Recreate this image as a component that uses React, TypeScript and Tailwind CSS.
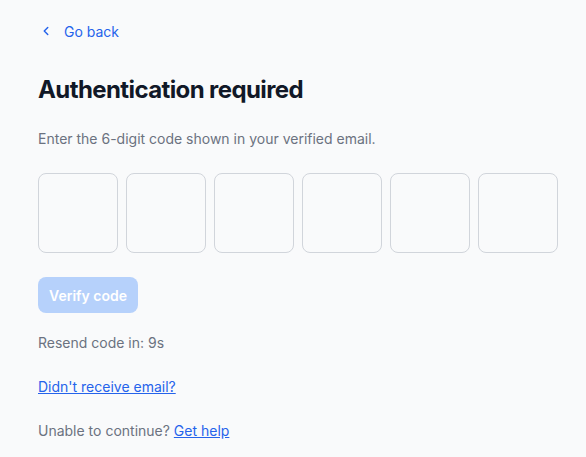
import React from 'react'
import { ChevronLeft } from 'lucide-react'

export default function App() {
  const digits = [0, 1, 2, 3, 4, 5]
  return (
    <div
      className="min-h-screen bg-[#f9fafb] pl-[38px] pr-[28px] pt-[20px]"
      style={{ fontFamily: 'Inter, "Noto Sans", sans-serif' }}
    >
      <a href="#" className="flex items-center gap-[11px] h-[22px] text-[14px] text-[#2563eb]">
        <ChevronLeft className="w-[14px] h-[14px] ml-[1px]" strokeWidth={2.5} />
        <span>Go back</span>
      </a>
      <h1 className="mt-[32px] text-[24px] leading-[32px] font-bold text-[#111827] tracking-[-0.6px]">
        Authentication required
      </h1>
      <p className="mt-[23px] text-[14px] leading-[20px] text-[#6b7280]">
        Enter the 6-digit code shown in your verified email.
      </p>
      <div className="mt-[24px] flex gap-[8px]">
        {digits.map((d) => (
          <input
            key={d}
            type="text"
            maxLength={1}
            className="w-[80px] h-[80px] rounded-[8px] border border-[#d1d5db] bg-[#f9fafb] text-center text-[24px]"
          />
        ))}
      </div>
      <button
        disabled
        className="mt-[24px] h-[36px] w-[100px] rounded-[8px] bg-[#b6d1fb] text-white text-[14px] font-semibold"
      >
        Verify code
      </button>
      <p className="mt-[20px] text-[14px] leading-[20px] text-[#6b7280]">Resend code in: 9s</p>
      <a href="#" className="block mt-[24px] text-[14px] leading-[20px] text-[#2563eb] underline">
        Didn't receive email?
      </a>
      <p className="mt-[24px] text-[14px] leading-[20px] text-[#6b7280]">
        Unable to continue?{' '}
        <a href="#" className="text-[#2563eb] underline">
          Get help
        </a>
      </p>
    </div>
  )
}
